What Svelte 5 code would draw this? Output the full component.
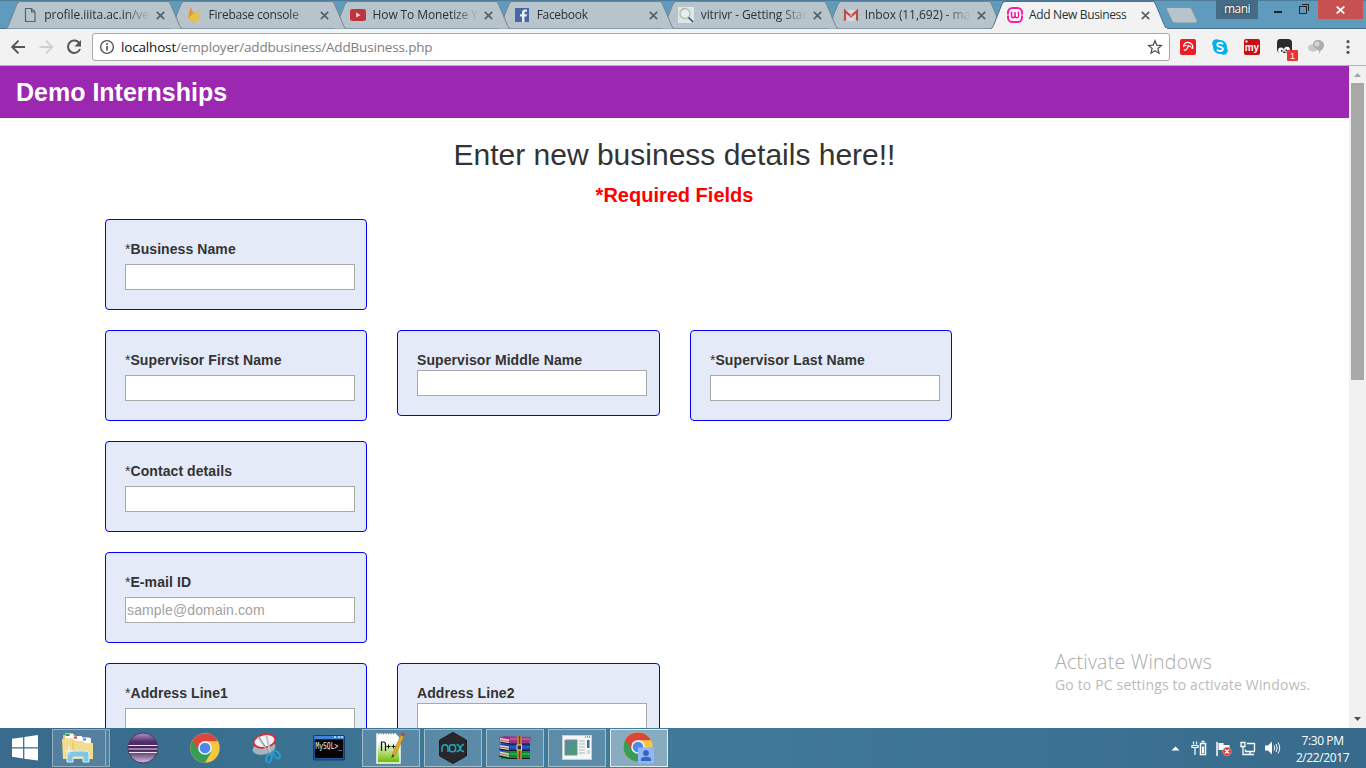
<script>
  const tabs = [
    { icon: 'page', title: 'profile.iiita.ac.in/ver', sp: -0.05 },
    { icon: 'firebase', title: 'Firebase console', sp: -0.2 },
    { icon: 'youtube', title: 'How To Monetize Y', sp: -0.1 },
    { icon: 'facebook', title: 'Facebook', sp: -0.3 },
    { icon: 'search', title: 'vitrivr - Getting Star', sp: -0.1 },
    { icon: 'gmail', title: 'Inbox (11,692) - ma', sp: -0.1 },
    { icon: 'wamp', title: 'Add New Business', sp: -0.35, active: true }
  ];
  const rows = [
    [{ label: 'Business Name', req: true }],
    [{ label: 'Supervisor First Name', req: true }, { label: 'Supervisor Middle Name' }, { label: 'Supervisor Last Name', req: true }],
    [{ label: 'Contact details', req: true }],
    [{ label: 'E-mail ID', req: true, hint: 'sample@domain.com' }],
    [{ label: 'Address Line1', req: true }, { label: 'Address Line2' }]
  ];
</script>

{#snippet favicon(name)}
  <svg class="fav" viewBox="0 0 16 16">
    {#if name === 'page'}
      <path d="M3.500 1.500h6l3.500 3.500v9.500h-9.500zM9.500 1.500v3.500h3.500" fill="none" stroke="#56646c" stroke-width="1.2" />
    {:else if name === 'firebase'}
      <path d="M2 11 4.500.6 7.800 6z" fill="#e58f2a" /><path d="M2 11 6.500 4 8 6.500 10 4.500l2 .2 1.500 7.300-5.500 4z" fill="#e3a63a" /><path d="M2 11.500 8.500 6 12 4l1.500 8-5.500 3.800z" fill="#e6c04b" />
    {:else if name === 'youtube'}
      <rect x="0" y="2" width="16" height="12" rx="2.500" fill="#c1343f" /><path d="M6.200 5.500v5L10.500 8z" fill="#f0dfe2" />
    {:else if name === 'facebook'}
      <rect x="1" y="1" width="14" height="14" fill="#4767a5" /><path d="M8 15V9.500H6V7.200h2V5.500C8 3.500 9.200 2.500 11 2.500h2v2.200h-1.400c-.8 0-1.100.4-1.100 1.100v1.400H13l-.4 2.300h-2.100V15z" fill="#e8eef4" />
    {:else if name === 'search'}
      <rect width="16" height="16" fill="#dce7ec" /><circle cx="7" cy="6.500" r="5" fill="#e4edf0" stroke="#b9c0a6" stroke-width="1.300" /><path d="M3 3.500A5 5 0 0 1 7 1.500" fill="none" stroke="#d49a91" /><path d="m10.500 10.500 4.700 4.700" stroke="#4c535b" stroke-width="1.700" />
    {:else if name === 'gmail'}
      <path d="M1 3h14v11H1z" fill="#d5dcdf" /><path d="M2 14V4l6 5.300L14 4v10" fill="none" stroke="#c54a43" stroke-width="2.200" /><path d="M2 14 8 8l6 6" fill="none" stroke="#b5c0c7" stroke-width=".8" />
    {:else}
      <rect x="1" y="1" width="14" height="14" rx="4.500" fill="#fff" stroke="#ff1aa0" stroke-width="2" /><path d="M4.500 4.500v4q0 2.200 1.700 2.200T8 8.500V5v3.500q0 2.200 1.800 2.200t1.700-2.200v-4" fill="none" stroke="#f5149a" stroke-width="1.500" /><path d="M0 8h2M14 8h2" stroke="#f2f2f2" />
    {/if}
  </svg>
{/snippet}

{#snippet chrome()}
  <circle cx="15" cy="15" r="14.700" fill="#f6c744" />
  <path d="M15 15 2.300 7.700A14.700 14.700 0 0 0 15 29.700L21.400 18.700z" fill="#379c55" />
  <path d="M2.300 7.700A14.700 14.700 0 0 1 28 8.200H15a6.800 6.800 0 0 0-6.400 9z" fill="#d8473b" />
  <circle cx="15" cy="15" r="6.800" fill="#f3f5f5" /><circle cx="15" cy="15" r="5.300" fill="#4a88ee" />
{/snippet}

<div class="screen">
  <div class="strip">
    <div class="tabs">
      {#each tabs as t, i}
        <div class="tab" class:active={t.active} style:z-index={t.active ? 20 : 10 - i}>
          <svg class="shape" viewBox="0 0 177 29">
            <path d="M0 28.500C1 28.500 1.500 27.500 2.500 25.500L11 4Q12.200 1.500 14 1.500H162Q163.500 1.500 164.500 4L173.500 25.500Q174.500 28.500 176.500 28.500" fill={t.active ? '#f2f2f2' : '#b8c4cc'} stroke={t.active ? '#47718b' : '#75848e'} stroke-width="1" />
            {#if t.active}<path d="M1 28h175v1H1z" fill="#f2f2f2" />{/if}
          </svg>
          {@render favicon(t.icon)}
          <span class="title" style:letter-spacing="{t.sp}px">{t.title}</span>
          <svg class="x" viewBox="0 0 9 9"><path d="m.8.8 7.400 7.400M8.200.8.8 8.200" stroke="#56616a" stroke-width="1.700" /></svg>
        </div>
      {/each}
      <svg class="newtab" width="36" height="19" viewBox="0 0 36 19"><path d="M4 1.500h21q2 0 3 2l5 11q1 2.500-1.500 2.500H11q-2 0-3-2L2.500 3.500Q1.500 1.500 4 1.500z" fill="#b8c4cc" stroke="#7896a8" /></svg>
    </div>
    <div class="window">
      <div class="user">mani</div>
      <svg class="wctl" width="60" height="20" viewBox="0 0 60 20"><path d="M16 11h8v2h-8z" fill="#222" /><path d="M41.500 6.500h7v7h-7zM44 4.500h6.500V11" fill="none" stroke="#222" /><path d="M41 6.500h8" stroke="#222" /></svg>
      <div class="close"><svg width="9" height="8" viewBox="0 0 9 8"><path d="m.7.500 7.600 7M8.300.5.700 7.500" stroke="#fff" stroke-width="1.700" /></svg></div>
    </div>
  </div>

  <div class="toolbar">
    <svg class="nav" width="92" height="36" viewBox="0 0 92 36" fill="none">
      <path d="M25 18H12.500M18.500 11.700 12.200 18l6.300 6.300" stroke="#555" stroke-width="1.900" />
      <path d="M39.500 18H52M46 11.700l6.300 6.300-6.300 6.300" stroke="#d0d0d0" stroke-width="1.900" />
      <path d="M79.500 14.500A6.200 6.200 0 1 0 80 20" stroke="#555" stroke-width="2" /><path d="M81 11v6.500h-6.500z" fill="#555" />
    </svg>
    <div class="address">
      <svg width="16" height="16" viewBox="0 0 16 16"><circle cx="8" cy="8" r="6.400" fill="none" stroke="#555" stroke-width="1.400" /><path d="M7.200 7h1.700v4.500H7.200zM7.200 4.300h1.700v1.600H7.200z" fill="#555" /></svg>
      <span class="url"><b>localhost</b>/employer/addbusiness/AddBusiness.php</span>
      <svg class="star" width="16" height="16" viewBox="0 0 16 16"><path d="m8 1.700 1.800 4.400 4.700.4-3.600 3.100 1.100 4.600L8 11.700l-4 2.500 1.100-4.600L1.500 6.500l4.700-.4z" fill="none" stroke="#555" stroke-width="1.300" /></svg>
    </div>
    <div class="ext">
      <svg width="16" height="16" viewBox="0 0 16 16"><rect width="16" height="16" rx="2" fill="#ed1c24" /><path d="M3.500 7.800C3.500 4.500 6.500 2.800 9.200 3.600c2.700.8 3.900 3.200 3.500 6" fill="none" stroke="#fff" stroke-width="1.300" /><path d="M3.500 7.800Q5 6 6.300 6.500T9 7.200M9 7.200q1.700-.6 2 1t1.700 1.400" fill="none" stroke="#fff" stroke-width="1" /><path d="M9 6 6.500 10.300q-1.300 1.700-2.700.2" stroke="#fff" stroke-width="1.200" fill="none" /></svg>
      <svg width="16" height="16" viewBox="0 0 16 16"><circle cx="8" cy="8" r="7" fill="#00aff0" /><circle cx="4.500" cy="4.500" r="4.300" fill="#00aff0" /><circle cx="11.500" cy="11.500" r="4.300" fill="#00aff0" /><path d="M11 5.200C9.500 3.300 5.300 3.500 5.300 5.700 5.300 8.600 10.900 7.200 10.900 10c0 2.400-4.400 2.700-5.900.6" fill="none" stroke="#fff" stroke-width="1.900" /></svg>
      <svg width="17" height="16" viewBox="0 0 17 16"><rect width="16" height="16" rx="2" fill="#c90d12" /><rect x="1.500" y="1.500" width="2" height="2" fill="#fff" /><text x=".7" y="12.300" font-family="Liberation Sans" font-weight="bold" font-size="10" fill="#fff">my</text></svg>
      <svg width="22" height="22" viewBox="0 0 22 22"><path d="M4 0h8q4 0 4 4v10H5Q1 14 1 10V4Q1 0 4 0z" fill="#2c2c2c" /><circle cx="5" cy="11.300" r="2.900" fill="#fff" /><circle cx="11" cy="10.700" r="2.900" fill="#fff" /><path d="M5 11h1.500v1.700H5zM9.500 10.500H11v1.700H9.500z" fill="#222" /><rect x="11" y="11" width="11" height="11" rx="1" fill="#ef3333" /><text x="14" y="20" font-family="Liberation Sans" font-size="9" fill="#fff">1</text></svg>
      <svg width="17" height="16" viewBox="0 0 17 16"><ellipse cx="5" cy="9" rx="5" ry="3.700" fill="#c9c9c9" /><path d="M10 1C5 1 4 5 6 8l5 4 .8 3 .5-3C18 9 17 1 10 1z" fill="#acacac" /><circle cx="9" cy="5" r="2.500" fill="#d5d5d5" /></svg>
      <svg width="4" height="16" viewBox="0 0 4 16" fill="#555"><circle cx="2" cy="2.700" r="1.600" /><circle cx="2" cy="8" r="1.600" /><circle cx="2" cy="13.300" r="1.600" /></svg>
    </div>
  </div>

  <div class="view">
    <div class="doc">
      <header>Demo Internships</header>
      <h1>Enter new business details here!!</h1>
      <h2>*Required Fields</h2>
      <form>
        {#each rows as row}
          <div class="row">
            {#each row as f}
              <div class="card" class:req={f.req}>
                <label><span>{#if f.req}<i>*</i>{/if}{f.label}</span><input type="text" placeholder={f.hint ?? ''} /></label>
              </div>
            {/each}
          </div>
        {/each}
      </form>
      <div class="watermark"><p>Activate Windows</p><small>Go to PC settings to activate Windows.</small></div>
    </div>
    <div class="scroll">
      <svg width="17" height="17" viewBox="0 0 17 17"><path d="M5 11h7L8.500 7z" fill="#a3a3a3" /></svg>
      <div class="thumb"></div>
      <svg class="down" width="17" height="17" viewBox="0 0 17 17"><path d="M5 6h7l-3.500 4z" fill="#505050" /></svg>
    </div>
  </div>

  <div class="taskbar">
    <div class="start"><svg width="26" height="26" viewBox="0 0 27 27" fill="#fff"><path d="M0 4 11.500 2.300v10.500H0zM12.800 2 27 0v12.800H12.800zM0 14h11.500v10.500L0 22.700zM12.800 14H27v12.600l-14.200-2z" /></svg></div>
    <div class="btn explorer">
      <svg width="36" height="32" viewBox="0 0 36 32">
        <path d="M2 3h3l1-1h7l2 3h13l2 3v18H2z" fill="#e4c468" /><path d="M4 1.500h8v5H4z" fill="#fff" /><path d="M4.500 2h4v2h-4z" fill="#1da944" /><path d="M12 4h9v5h-9z" fill="#fff" /><path d="M13 4.500h3v2h-3z" fill="#d13b24" /><path d="M21 6h9v5h-9z" fill="#fff" /><path d="M22 6.500h3v2h-3z" fill="#2b94e0" />
        <path d="M1 7h11l2 2h8l2 2h8v16H2z" fill="#f3dc8e" /><path d="M12 9v17" stroke="#e4c269" /><path d="M6 30V22q0-3 3-3h16q3 0 3 3v8h-6v-5H12v5z" fill="#81c6e3" stroke="#d5f2fb" /><path d="M8 14v9M4 19h8" stroke="#eefcff" stroke-width=".8" />
      </svg>
    </div>
    <div class="sliver"></div>
    <div class="pin">
      <svg width="32" height="32" viewBox="0 0 32 32"><defs><linearGradient id="ecl" x2="0" y2="1"><stop stop-color="#b49bc8" /><stop offset=".28" stop-color="#54306f" /><stop offset=".55" stop-color="#402052" /><stop offset="1" stop-color="#d5bfe5" /></linearGradient></defs><circle cx="16" cy="16" r="15" fill="url(#ecl)" stroke="#513267" /><path d="M1.500 13.500h29M1.500 17h29M2 20.500h28" stroke="#eee5f4" stroke-width="1.200" /></svg>
    </div>
    <div class="pin"><svg width="30" height="30" viewBox="0 0 30 30">{@render chrome()}</svg></div>
    <div class="pin">
      <svg width="32" height="32" viewBox="0 0 32 32"><ellipse cx="13" cy="16" rx="11.500" ry="6.500" fill="#a9b3bb" transform="rotate(-12 13 16)" /><ellipse cx="13.500" cy="9" rx="11" ry="6.500" fill="#f4f4f4" stroke="#d32d34" stroke-width="1.800" transform="rotate(-12 13.500 9)" /><path d="m7 5 12 17M15.500 4l4 18" stroke="#b9c4cc" stroke-width="2" /><path d="m8 5 11 17" stroke="#6f7d89" stroke-width=".7" /><ellipse cx="18" cy="26" rx="2.500" ry="4.500" fill="none" stroke="#219fd9" stroke-width="2" transform="rotate(15 18 26)" /><ellipse cx="25.500" cy="22.500" rx="2.500" ry="4.500" fill="none" stroke="#219fd9" stroke-width="2" transform="rotate(-42 25.500 22.500)" /></svg>
    </div>
    <div class="pin">
      <svg width="32" height="26" viewBox="0 0 32 26"><rect x=".5" y=".5" width="31" height="24.500" rx="1" fill="#1f539b" stroke="#163c70" /><path d="M1 1h30v3H1z" fill="#3d83d8" /><path d="M21 2h2M25 2h2M28 2h2" stroke="#d8e7ff" stroke-width="1.400" /><path d="M2 4.500h28V23H2z" fill="#050505" /><text x="2.500" y="14" font-family="DejaVu Sans Mono" font-size="8" textLength="26.500" lengthAdjust="spacingAndGlyphs" fill="#f4f4f4">MySQL&gt;_</text></svg>
    </div>
    <div class="apps">
      <div class="btn">
        <svg width="32" height="34" viewBox="0 0 32 34"><defs><linearGradient id="npp" x2="0" y2="1"><stop offset=".25" stop-color="#fff" /><stop offset=".95" stop-color="#75bd0b" /></linearGradient></defs><path d="M2 3h18l5 5v24H2z" fill="url(#npp)" stroke="#f7faf4" stroke-width="1.500" /><path d="M3 2.500h17" stroke="#777" stroke-width="1.500" stroke-dasharray="1 1.500" /><path d="M6.500 20V11h2.300q1.700 0 1.700 3v6" fill="none" stroke="#111" stroke-width="1.200" /><path d="M11.500 15.500h4m-2-2v4M16.500 15.500h4m-2-2v4" stroke="#111" /><path d="M16.500 27 18 22 26 4l3 1.500-8.500 18z" fill="#e9aa27" stroke="#9b7026" stroke-width=".6" /><path d="m26 4 1-2.500 3 1.500-1 2.500z" fill="#ba424c" /><path d="m16.500 27 1-3.500 2 1z" fill="#333" /></svg>
      </div>
      <div class="btn"><svg width="30" height="32" viewBox="0 0 30 32"><path d="m15 .5 13.500 7.700v15.600L15 31.500 1.500 23.800V8.200z" fill="#27272c" stroke="#19191e" /><path d="M4 20v-4q0-3.300 3-3.300t3 3.300v4M18.500 12.500q2.500 0 3.500 3.500t4 3.500M26 12.500q-2.500 0-3.500 3.500t-4 3.500" fill="none" stroke="#20a8ba" stroke-width="1.500" /><rect x="11.500" y="12.700" width="6" height="7" rx="2.500" fill="none" stroke="#20a8ba" stroke-width="1.500" /></svg></div>
      <div class="btn">
        <svg width="34" height="26" viewBox="0 0 34 26">
          <path d="M1 3 6 1l27 1-2 7H3z" fill="#9c347f" /><path d="M2 9h30v7H2z" fill="#1745ad" /><path d="M2 16h30v8H3z" fill="#168536" />
          <path d="m2 7 10 2h20M1 14l11 1.500h20M1 21l11 2.500h20" fill="none" stroke="#161523" stroke-width="1.200" /><path d="m2 3 9 1.500V8L2 6.500zM2 10l9 1.500V15l-9-1.500zM2 16.500l9 2V22l-9-2z" fill="#e8d8d0" /><path d="m2 5 9 1.500M2 12l9 1.500M2 18.500l9 2" stroke="#8d6261" /><path d="M12 4h20" stroke="#d879ba" /><path d="M12 12h20" stroke="#2b75ff" /><path d="M12 19h20" stroke="#20d747" /><path d="M19 1h5v23h-5z" fill="#bb7834" /><path d="M21.500 1v23" stroke="#614024" /><rect x="19" y="10" width="4.500" height="5" fill="#303030" stroke="#e7d696" />
        </svg>
      </div>
      <div class="btn"><svg width="30" height="26" viewBox="0 0 30 26"><rect x=".5" y=".5" width="29" height="24" fill="#f4f6f6" stroke="#c6d0d4" /><path d="M23 2h1M25 2h1M27 2h1" stroke="#444" /><defs><linearGradient id="pic" x2="1" y2="1"><stop stop-color="#5f83aa" /><stop offset="1" stop-color="#42a269" /></linearGradient></defs><path d="M3 5h12v15H3z" fill="url(#pic)" stroke="#71919b" /><path d="M17 6h6M17 9h6M17 12h6M17 15h6M17 18h6M25 16h3M25 18h3" stroke="#aeb6ba" /><path d="M25 5h2.500v8H25z" fill="#396fa2" /></svg></div>
      <div class="btn on"><svg width="32" height="32" viewBox="0 0 32 32">{@render chrome()}<rect x="15" y="15.500" width="16" height="16" fill="#90b6fb" /><circle cx="23" cy="21" r="2.900" fill="#3566bd" /><path d="M18 29v-1.500q0-2.800 5-2.800t5 2.800V29z" fill="#3566bd" /></svg></div>
    </div>
    <div class="tray">
      <svg width="112" height="20" viewBox="0 0 112 20" fill="none" stroke="#fff">
        <path d="M1.500 12.500h8L5.500 8.500z" fill="#fff" stroke="none" />
        <path d="M23.500 3.500v3M26.500 3.500v3M25 10v7M22 7.500h6v2h-6z" stroke-width="1.200" /><path d="M30.500 5.500h5v11h-5z" stroke-width="1.500" /><path d="M31.500 3.500h3" stroke-width="1.500" /><path d="M32 8.500h2V15h-2z" fill="#fff" stroke="none" />
        <path d="M47 4v14" stroke-width="1.500" /><path d="M48.500 5h5v2h6v7h-6v-2h-5z" fill="#fff" stroke="none" /><circle cx="57" cy="13.500" r="4.200" fill="#e12f26" stroke="#f0a49d" stroke-width=".7" /><path d="m55 11.500 4 4m0-4-4 4" stroke-width="1.500" />
        <path d="M77 5.500h7.500v8h-9v-2M76 16.500h8M80 14v2M71 4.500h4v4h-4zM73 9v7.500h3" stroke-width="1.300" />
        <path d="M95 7.500h3l4-4v13l-4-4h-3z" fill="#fff" stroke="none" /><path d="M104 7.500q1.500 2.500 0 5M106 6q2.500 4 0 8M108 4.500q3.500 5.500 0 11" stroke-width="1" />
      </svg>
      <div class="clock"><span>7:30 PM</span><span>2/22/2017</span></div>
    </div>
  </div>
</div>

<style>
  :global(body) { margin: 0; overflow: hidden; }
  .screen { width: 1366px; height: 768px; display: flex; flex-direction: column; overflow: hidden; font-family: "Open Sans", "Noto Sans", sans-serif; }
  svg { display: block; flex: none; }
  .strip { height: 29px; flex: none; display: flex; justify-content: space-between; background: linear-gradient(#4e7d9a 1px, #5f9bbd 1px 28px, #47718b 28px); }
  .tabs { display: flex; padding-left: 6px; isolation: isolate; }
  .tab { position: relative; width: 177px; height: 29px; margin-right: -12.900px; display: flex; align-items: center; flex: none; box-sizing: border-box; padding-left: 16px; }
  .shape { position: absolute; inset: 0; width: 177px; height: 29px; }
  .fav { position: relative; width: 16px; height: 16px; margin-top: 1px; }
  .title { position: relative; width: 108px; margin-left: 6.300px; white-space: nowrap; font-size: 12px; line-height: 18px; margin-top: 1px; color: #27323a; -webkit-mask-image: linear-gradient(90deg, #000 80px, transparent 106px); mask-image: linear-gradient(90deg, #000 80px, transparent 106px); }
  .active .title { -webkit-mask-image: none; mask-image: none; }
  .x { position: relative; width: 9px; height: 9px; margin: 1px 0 0 3.900px; }
  .newtab { margin: 6px 0 0 9px; }
  .window { display: flex; }
  .user { width: 42px; height: 19px; background: #466b84; color: #fff; font-size: 12px; line-height: 18px; text-align: center; text-shadow: 0 0 2px #222; letter-spacing: -.6px; }
  .close { width: 45px; height: 19px; margin-right: 3px; background: #c75050; display: flex; align-items: center; justify-content: center; }
  .toolbar { height: 36px; flex: none; background: #f2f2f2; border-bottom: 1px solid #b6b4b6; display: flex; }
  .address { width: 1078px; height: 28px; margin-top: 4px; box-sizing: border-box; border: 1px solid #a9a7a9; border-radius: 3px; background: #fff; display: flex; align-items: center; padding: 0 6px; }
  .url { flex: 1; margin-left: 6px; font-size: 13.500px; line-height: 20px; color: #808080; letter-spacing: -.17px; }
  .url b { font-weight: 400; color: #111; }
  .ext { display: flex; padding: 10px 0 0 10px; gap: 16px; }
  .ext svg:nth-child(4) { margin-left: -1px; margin-right: -6px; }
  .ext svg:nth-child(5) { margin-right: 5px; }
  .view { height: 662px; flex: none; display: flex; }
  .doc { position: relative; width: 1349px; height: 662px; overflow: hidden; background: #fff; color: #333; font-family: "Liberation Sans", Arial, sans-serif; }
  header { height: 52px; box-sizing: border-box; background: #9c27b0; color: #fff; font-size: 25px; line-height: 52px; font-weight: 700; padding-left: 16px; }
  h1 { margin: 20px 0 0; font-size: 30px; line-height: 33px; font-weight: 400; text-align: center; }
  h2 { margin: 14px 0 0; font-size: 20px; line-height: 20px; font-weight: 700; text-align: center; color: #f00; }
  form { padding: 14px 0 0 105px; }
  .row { display: flex; align-items: flex-start; gap: 30px; margin-bottom: 20px; }
  .card { width: 262px; height: 86px; box-sizing: border-box; flex: none; padding: 19px; border: 1px solid #00f; border-radius: 4px; background: #e5eaf8; }
  .card:nth-child(2) { width: 263px; }
  .card.req { height: 91px; }
  label { display: flex; flex-direction: column; font-size: 14px; line-height: 20px; font-weight: 700; letter-spacing: .08px; }
  label i { font-style: normal; font-weight: 400; letter-spacing: 0; }
  .req input { margin-top: 5px; }
  input { width: 230px; height: 26px; box-sizing: border-box; margin: 0; padding: 1px; border: 1px solid #a9a9a9; background: #fff; font: 14px "Liberation Sans", Arial, sans-serif; letter-spacing: .13px; }
  input::placeholder { color: #a2a2a2; }
  .watermark { position: absolute; left: 1055px; top: 584px; color: #bbb; font-family: "Open Sans", sans-serif; white-space: nowrap; }
  .watermark p { margin: 0; font-size: 19.500px; line-height: 24px; font-weight: 300; letter-spacing: .25px; color: #aaa; }
  .watermark small { display: block; font-size: 14px; line-height: 22px; letter-spacing: .16px; }
  .scroll { width: 17px; display: flex; flex-direction: column; background: #f1f1f1; }
  .thumb { width: 13px; height: 297px; margin-left: 2px; background: #a8a8a8; }
  .down { margin-top: auto; }
  .taskbar { height: 40px; flex: none; display: flex; align-items: center; background: linear-gradient(90deg, #3a6a8c, #39708f 18%, #427a9a 40%, #407897 55%, #3c7394 75%, #386a8b); }
  .start { width: 40px; padding-left: 12px; }
  .btn { width: 58px; height: 38px; box-sizing: border-box; border: 1px solid #a4bdcb; background: #ffffff24; display: flex; align-items: center; justify-content: center; }
  .btn.on { background: #ffffff60; border-color: #e2edf2; }
  .explorer { width: 54px; border-color: #91afc0; }
  .sliver { width: 4px; height: 38px; box-sizing: border-box; border: solid #91afc0; border-width: 1px 1px 1px 0; margin-right: 2px; background: #ffffff24; }
  .pin { width: 62px; display: flex; justify-content: center; }
  .apps { display: flex; gap: 4px; margin-left: 2px; }
  .tray { margin-left: auto; display: flex; align-items: center; color: #fff; }
  .clock { width: 81px; display: flex; flex-direction: column; text-align: center; font-size: 12px; line-height: 17px; letter-spacing: -.4px; padding-top: 2px; margin-right: 3px; }
</style>
